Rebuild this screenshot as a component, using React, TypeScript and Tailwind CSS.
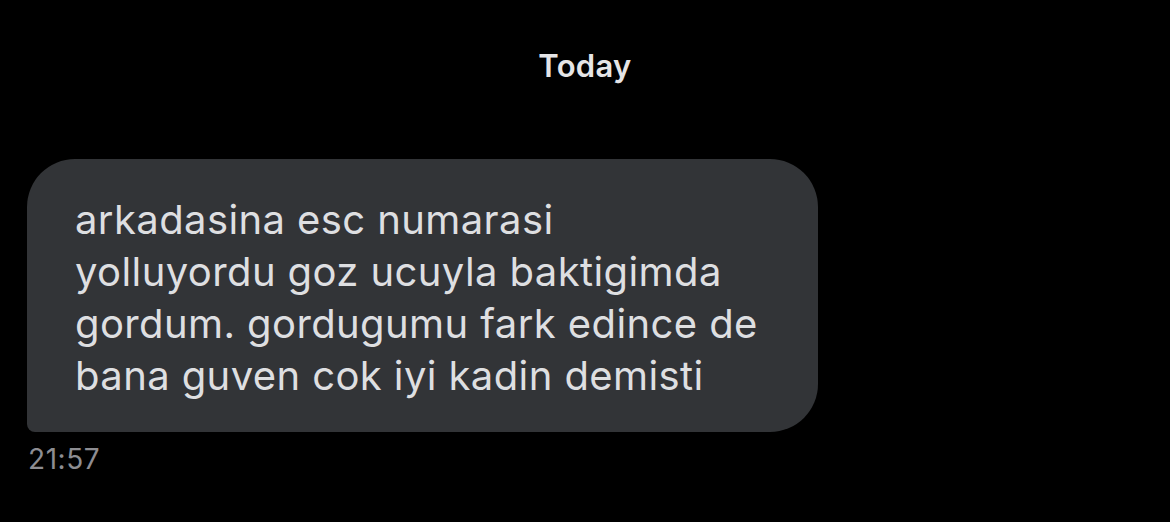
export default function App() {
  const lines = [
    "arkadasina esc numarasi",
    "yolluyordu goz ucuyla baktigimda",
    "gordum. gordugumu fark edince de",
    "bana guven cok iyi kadin demisti",
  ];

  return (
    <div
      className="h-[522px] w-[1170px] overflow-hidden bg-black"
      style={{ fontFamily: "Inter, 'Noto Sans', sans-serif" }}
    >
      <div className="flex justify-center pt-[46px]">
        <p className="text-[31px] font-semibold leading-[40px] tracking-[0.01em] text-[#e5e5e7]">
          Today
        </p>
      </div>

      <div className="mt-[73px] pl-[27px]">
        <div className="w-[791px] rounded-[48px] rounded-bl-[8px] bg-[#323437] pb-[30px] pl-[48px] pt-[35px]">
          {lines.map((l) => (
            <p key={l} className="text-[40px] leading-[52px] tracking-[0.01em] text-[#dedfe1]">
              {l}
            </p>
          ))}
        </div>
        <p className="mt-[11px] pl-[1px] text-[28px] leading-[32px] tracking-[0.02em] text-[#8d8d92]">
          21:57
        </p>
      </div>
    </div>
  );
}
